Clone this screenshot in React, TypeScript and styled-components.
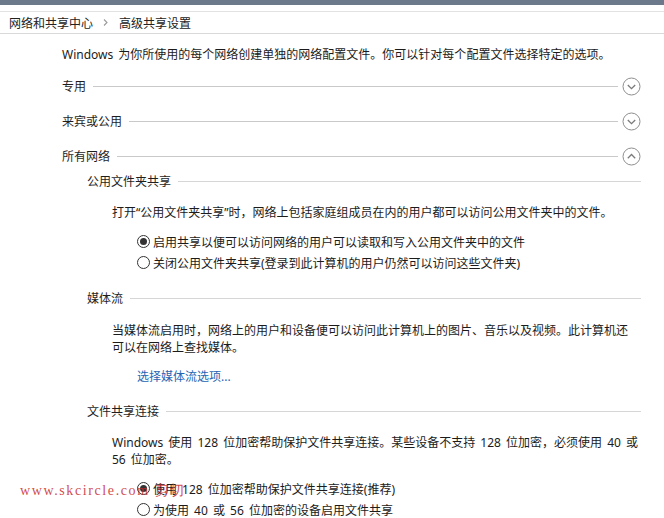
import React from "react";
import styled, { createGlobalStyle } from "styled-components";

const Global = createGlobalStyle`
  html, body { margin: 0; padding: 0; background: #ffffff; }
  body {
    font-family: "Noto Sans", "Noto Sans CJK SC", sans-serif;
    font-size: 12px;
    color: #1b1b1b;
  }
`;

const Page = styled.div`
  position: relative;
  width: 664px;
  height: 518px;
  overflow: hidden;
  background: #fff;
`;

const TopStrip = styled.div`
  height: 5px;
  background: #6c798b;
`;

const Breadcrumb = styled.div`
  margin-top: 6px;
  height: 21px;
  border-top: 1px solid #e2e2e2;
  border-bottom: 1px solid #d9d9d9;
  display: flex;
  align-items: center;
  padding-left: 9px;
  color: #222;
`;

const Crumb = styled.span`
  white-space: nowrap;
`;

const CrumbSep = styled.svg`
  margin: 0 11px 0 10px;
  flex: none;
`;

const Content = styled.div`
  padding: 12px 23px 0 62px;
`;

const Intro = styled.p`
  margin: 0;
  line-height: 17px;
  white-space: nowrap;
  word-spacing: 2px;
`;

const HeaderRow = styled.div<{ $top: number }>`
  display: flex;
  align-items: center;
  height: 20px;
  margin-top: ${(p) => p.$top}px;
`;

const HeaderLabel = styled.span`
  white-space: nowrap;
  margin-right: 7px;
  color: #1e1e1e;
`;

const Rule = styled.div<{ $light?: boolean }>`
  flex: 1;
  height: 1px;
  background: ${(p) => (p.$light ? "#d6d6d6" : "#c9c9c9")};
`;

const ToggleSvg = styled.svg`
  margin-left: 4px;
  flex: none;
`;

const Sub = styled.div`
  padding-left: 25px;
`;

const Para = styled.p<{ $top: number }>`
  margin: ${(p) => p.$top}px 0 0 0;
  padding-left: 25px;
  line-height: 17px;
  white-space: nowrap;
  word-spacing: 2px;
`;

const RadioList = styled.div<{ $top: number }>`
  margin-top: ${(p) => p.$top}px;
  padding-left: 50px;
`;

const RadioRow = styled.label`
  display: flex;
  align-items: center;
  height: 21px;
  white-space: nowrap;
  word-spacing: 2px;
`;

const RadioDot = styled.span<{ $checked?: boolean }>`
  box-sizing: border-box;
  width: 13px;
  height: 13px;
  border: 1px solid #333;
  border-radius: 50%;
  margin-right: 3px;
  display: flex;
  align-items: center;
  justify-content: center;
  flex: none;
  &::after {
    content: "";
    width: 7px;
    height: 7px;
    border-radius: 50%;
    background: ${(p) => (p.$checked ? "#333" : "transparent")};
  }
`;

const LinkLine = styled.div<{ $top: number }>`
  margin-top: ${(p) => p.$top}px;
  padding-left: 50px;
  line-height: 17px;
`;

const Link = styled.a`
  color: #2566b4;
  text-decoration: none;
`;

const Watermark = styled.div`
  position: absolute;
  left: 20px;
  top: 482px;
  font-family: "Liberation Serif", serif;
  font-size: 14px;
  letter-spacing: 1.6px;
  color: rgba(200, 40, 40, 0.85);
  white-space: nowrap;
  pointer-events: none;
`;

const Toggle = ({ up }: { up?: boolean }) => (
  <ToggleSvg width="19" height="19" viewBox="0 0 19 19">
    <circle cx="9.5" cy="9.5" r="8.5" fill="none" stroke="#8e8e8e" strokeWidth="1" />
    <polyline
      points={up ? "5.8,11.2 9.5,7.5 13.2,11.2" : "5.8,8 9.5,11.7 13.2,8"}
      fill="none"
      stroke="#7a7a7a"
      strokeWidth="1.3"
    />
  </ToggleSvg>
);

const Section = ({ label, top, up }: { label: string; top: number; up?: boolean }) => (
  <HeaderRow $top={top}>
    <HeaderLabel>{label}</HeaderLabel>
    <Rule />
    <Toggle up={up} />
  </HeaderRow>
);

const SubHeader = ({ label, top }: { label: string; top: number }) => (
  <HeaderRow $top={top}>
    <HeaderLabel>{label}</HeaderLabel>
    <Rule $light />
  </HeaderRow>
);

export default function App() {
  return (
    <Page>
      <Global />
      <TopStrip />
      <Breadcrumb>
        <Crumb>网络和共享中心</Crumb>
        <CrumbSep width="5" height="7" viewBox="0 0 5 7">
          <polyline points="1,0.5 4,3.5 1,6.5" fill="none" stroke="#9a9a9a" strokeWidth="1.1" />
        </CrumbSep>
        <Crumb>高级共享设置</Crumb>
      </Breadcrumb>
      <Content>
        <Intro>Windows 为你所使用的每个网络创建单独的网络配置文件。你可以针对每个配置文件选择特定的选项。</Intro>
        <Section label="专用" top={13} />
        <Section label="来宾或公用" top={15} />
        <Section label="所有网络" top={15} up />
        <Sub>
          <SubHeader label="公用文件夹共享" top={5} />
          <Para $top={13}>打开“公用文件夹共享”时，网络上包括家庭组成员在内的用户都可以访问公用文件夹中的文件。</Para>
          <RadioList $top={10}>
            <RadioRow>
              <RadioDot $checked />
              启用共享以便可以访问网络的用户可以读取和写入公用文件夹中的文件
            </RadioRow>
            <RadioRow>
              <RadioDot />
              关闭公用文件夹共享(登录到此计算机的用户仍然可以访问这些文件夹)
            </RadioRow>
          </RadioList>
          <SubHeader label="媒体流" top={15} />
          <Para $top={14}>
            当媒体流启用时，网络上的用户和设备便可以访问此计算机上的图片、音乐以及视频。此计算机还
            <br />
            可以在网络上查找媒体。
          </Para>
          <LinkLine $top={12}>
            <Link href="#">选择媒体流选项...</Link>
          </LinkLine>
          <SubHeader label="文件共享连接" top={16} />
          <Para $top={13}>
            Windows 使用 128 位加密帮助保护文件共享连接。某些设备不支持 128 位加密，必须使用 40 或
            <br />
            56 位加密。
          </Para>
          <RadioList $top={10}>
            <RadioRow>
              <RadioDot $checked />
              使用 128 位加密帮助保护文件共享连接(推荐)
            </RadioRow>
            <RadioRow>
              <RadioDot />
              为使用 40 或 56 位加密的设备启用文件共享
            </RadioRow>
          </RadioList>
        </Sub>
      </Content>
      <Watermark>www.skcircle.com 剪切</Watermark>
    </Page>
  );
}
